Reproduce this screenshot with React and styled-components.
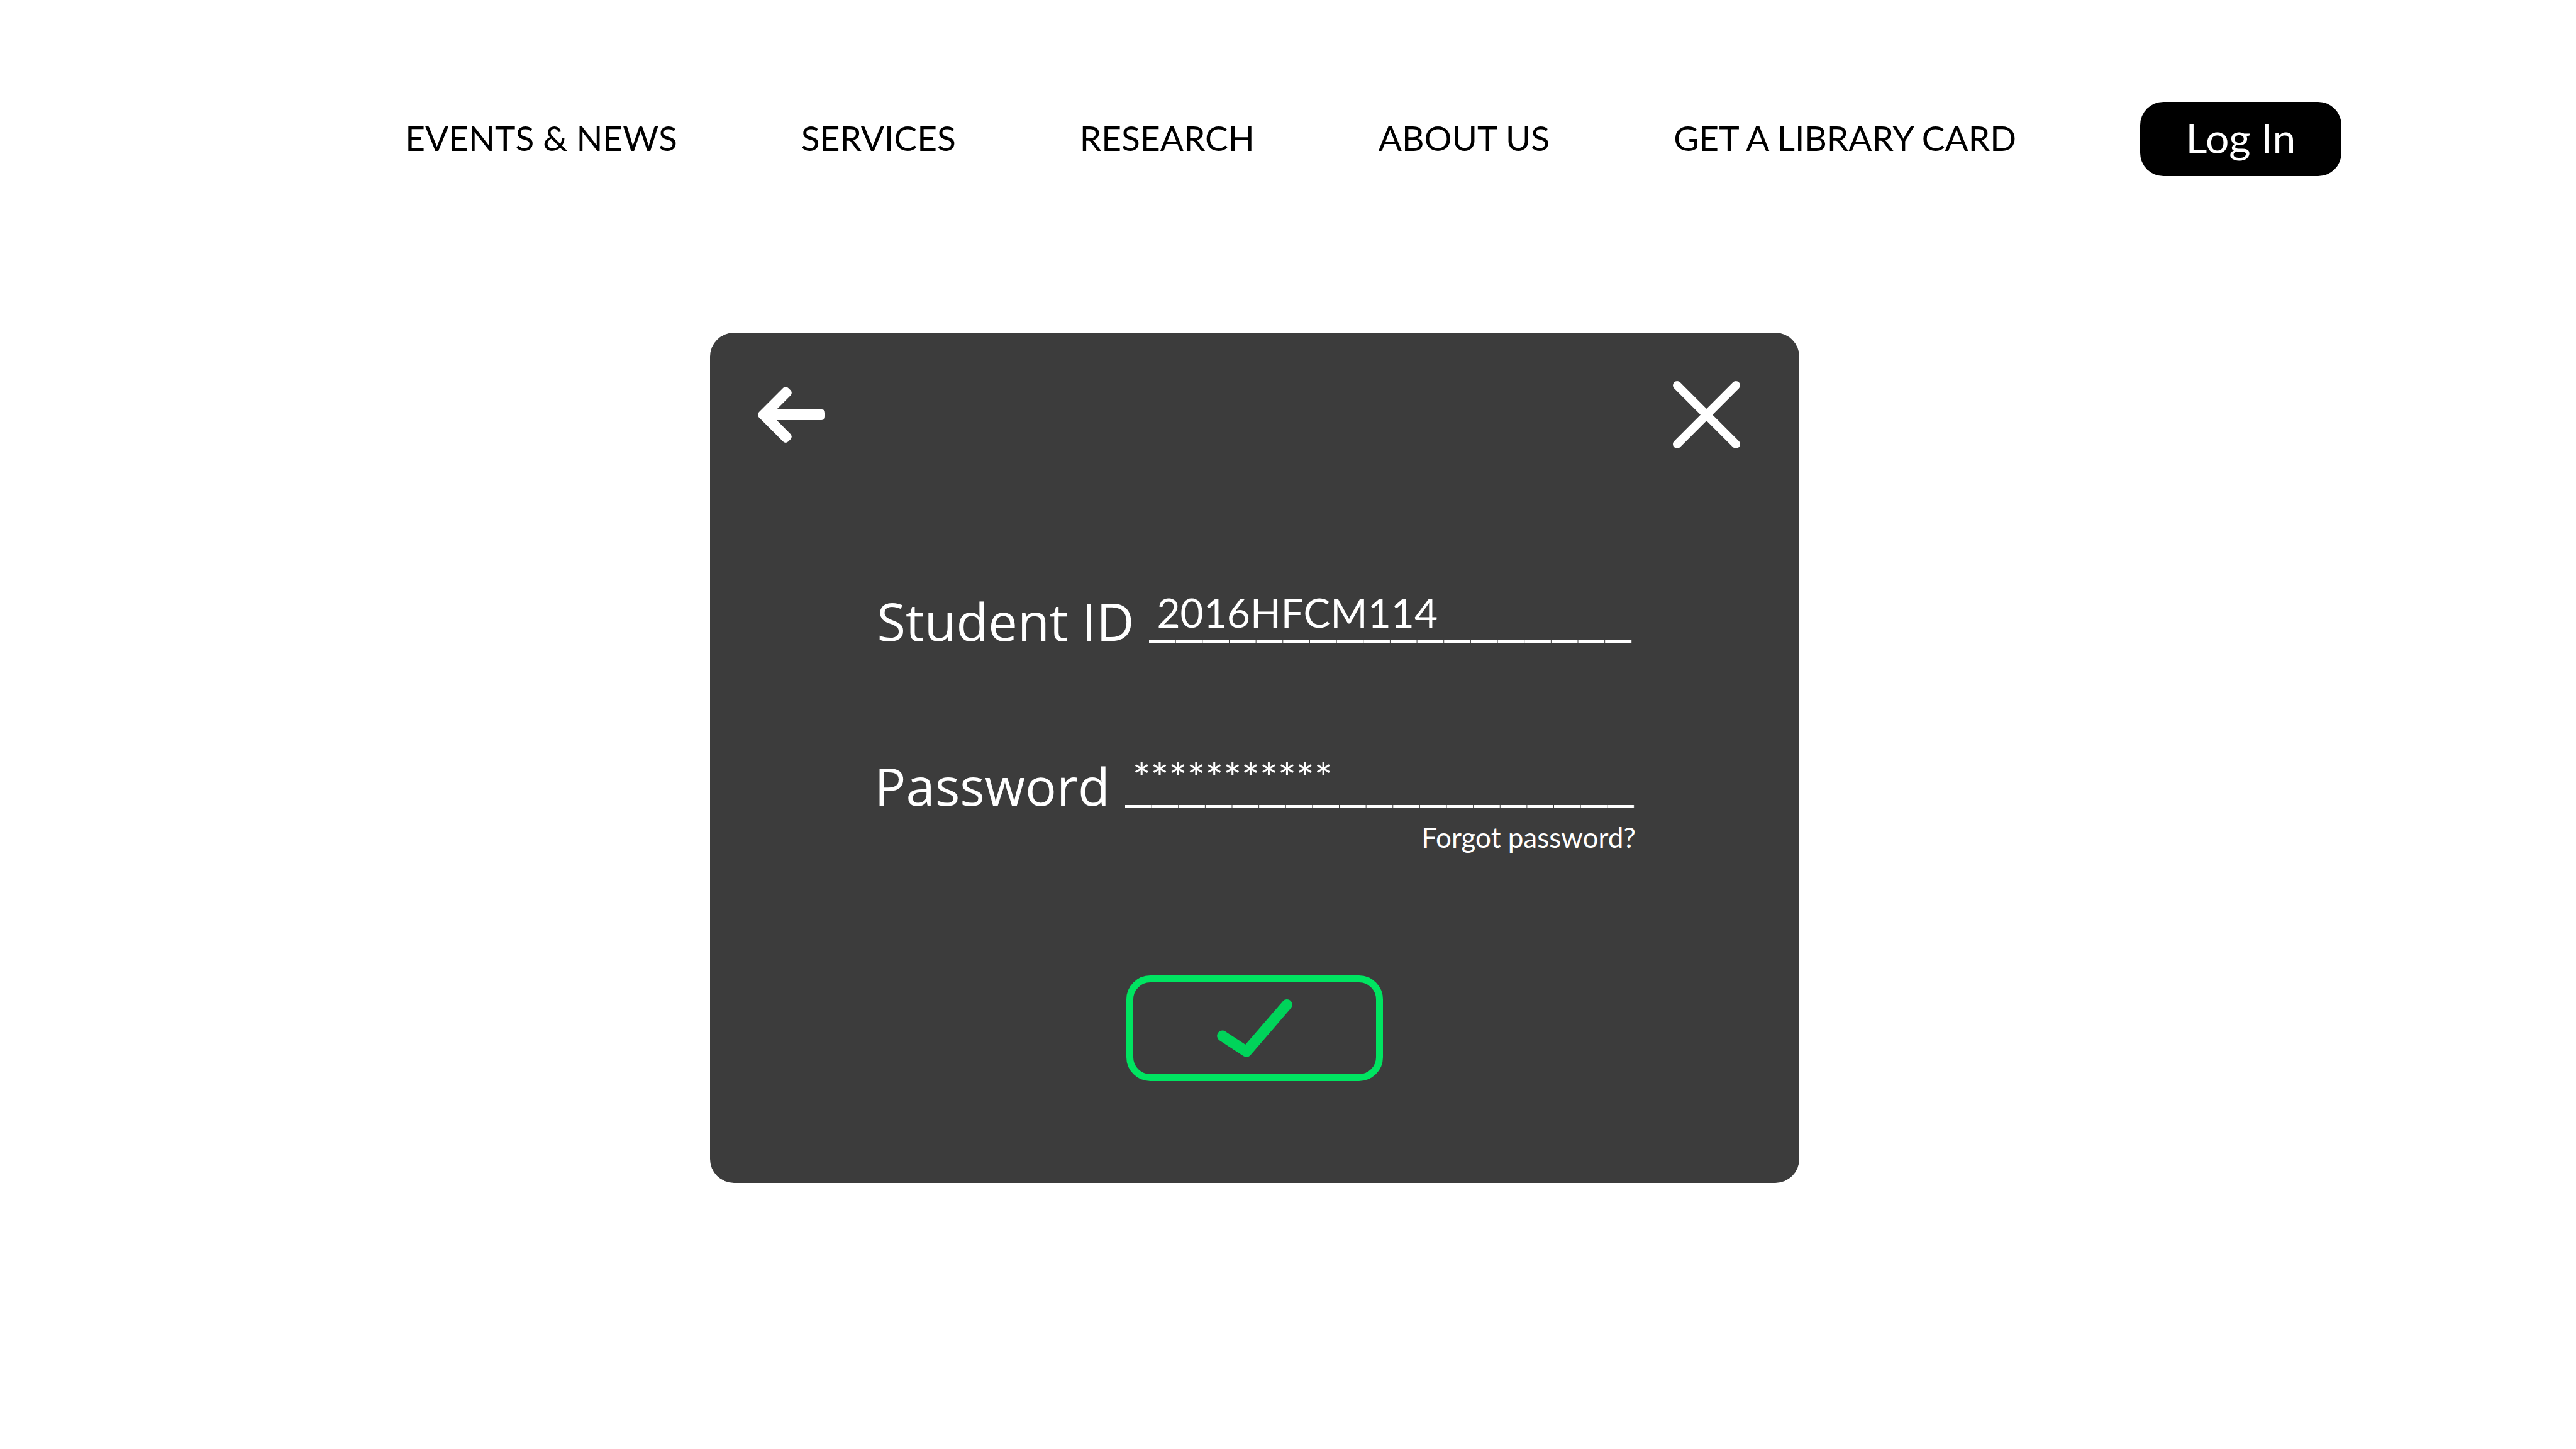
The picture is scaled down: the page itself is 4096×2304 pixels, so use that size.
import React from "react";
import styled, { createGlobalStyle } from "styled-components";

const GlobalStyle = createGlobalStyle`
  *, *::before, *::after { box-sizing: border-box; }
  body {
    margin: 0;
    background: #ffffff;
    font-family: Lato, "Open Sans", sans-serif;
  }
`;

const Page = styled.div`
  display: flex;
  flex-direction: column;
  min-height: 100vh;
`;

const Header = styled.header`
  padding: 162px 373px 0 0;
`;

const Nav = styled.nav`
  display: flex;
  justify-content: flex-end;
  align-items: center;
  gap: 197px;
`;

const NavLink = styled.a`
  padding-bottom: 4px;
  color: #000000;
  font-size: 55px;
  line-height: 66px;
  white-space: nowrap;
  text-decoration: none;
`;

const LoginButton = styled.button`
  width: 320px;
  height: 118px;
  padding: 0 0 4px;
  border: 0;
  border-radius: 37px;
  background: #000000;
  color: #ffffff;
  font: inherit;
  font-size: 66px;
  line-height: 80px;
  cursor: pointer;
`;

const Main = styled.main`
  display: flex;
  justify-content: center;
  padding: 249px 106px 0 0;
`;

const Card = styled.section`
  width: 100%;
  max-width: 1732px;
  padding-bottom: 162px;
  border-radius: 38px;
  background: #3c3c3c;
  color: #ffffff;
`;

const CardBar = styled.div`
  display: flex;
  justify-content: space-between;
  padding: 77px 94px 0 76px;
`;

const IconButton = styled.button`
  display: block;
  width: 107px;
  height: 107px;
  padding: 0;
  border: 0;
  background: none;
  color: inherit;
  cursor: pointer;

  svg {
    display: block;
    width: 100%;
    height: 100%;
  }
`;

const Form = styled.form`
  display: flex;
  flex-direction: column;
  width: 100%;
  max-width: 1212px;
  margin: 222px auto 0;
`;

const Fields = styled.div`
  display: flex;
  flex-direction: column;
  gap: 162px;
`;

const Field = styled.div`
  display: flex;
  justify-content: center;
  gap: 24px;
  height: 100px;
`;

const Label = styled.label`
  font-family: "Open Sans", sans-serif;
  font-size: 83px;
  line-height: 104px;
  white-space: nowrap;
`;

/* The underline is a run of dashes, one for each character slot. */
const Input = styled.input`
  width: calc(${(p) => p.$slots} * 128px / 3);
  height: 88px;
  padding: 0 0 12px 12px;
  border: 0;
  outline: 0;
  border-radius: 0;
  background: linear-gradient(to right, #ffffff calc(100% - 1px), transparent 0)
    left bottom / calc(100% / ${(p) => p.$slots}) 5px repeat-x;
  color: inherit;
  font: inherit;
  font-size: ${(p) => (p.$masked ? 68 : 64)}px;
`;

const ForgotLink = styled.a`
  align-self: flex-end;
  margin-top: 8px;
  color: inherit;
  font-size: 44px;
  line-height: 52px;
  text-decoration: none;
`;

const SubmitButton = styled.button`
  display: flex;
  align-items: center;
  justify-content: center;
  align-self: center;
  width: 408px;
  height: 168px;
  margin-top: 194px;
  padding: 0;
  border: 11px solid #00e461;
  border-radius: 38px;
  background: none;
  color: #00d45a;
  cursor: pointer;

  svg {
    width: 120px;
    height: 92px;
  }
`;

const LINKS = ["EVENTS & NEWS", "SERVICES", "RESEARCH", "ABOUT US", "GET A LIBRARY CARD"];

const BackIcon = () => (
  <svg viewBox="0 0 150 150" fill="currentColor" aria-hidden="true">
    <path d="M2.5 69 L56.5 15 Q62 10 67.5 15 L73 20.5 Q78 26 73 32 L42 63 H142 Q150 63 150 71 V79 Q150 87 142 87 H42 L73 118 Q78 124 73 129.5 L67.5 135 Q62 140 56.5 135 L2.5 81 Q-2 75 2.5 69 Z" />
  </svg>
);

const CloseIcon = () => (
  <svg viewBox="0 0 150 150" fill="none" stroke="currentColor" strokeWidth="19" strokeLinecap="round" aria-hidden="true">
    <path d="M9.5 9.5 L140.5 140.5 M140.5 9.5 L9.5 140.5" />
  </svg>
);

const CheckIcon = () => (
  <svg viewBox="0 0 169 130" fill="none" stroke="currentColor" strokeWidth="24" strokeLinecap="round" strokeLinejoin="round" aria-hidden="true">
    <path d="M12 82 L66 117.5 L157 12" />
  </svg>
);

export default function App() {
  return (
    <Page>
      <GlobalStyle />
      <Header>
        <Nav>
          {LINKS.map((text) => (
            <NavLink key={text} href="#">
              {text}
            </NavLink>
          ))}
          <LoginButton type="button">Log In</LoginButton>
        </Nav>
      </Header>
      <Main>
        <Card>
          <CardBar>
            <IconButton type="button" aria-label="Back">
              <BackIcon />
            </IconButton>
            <IconButton type="button" aria-label="Close">
              <CloseIcon />
            </IconButton>
          </CardBar>
          <Form onSubmit={(e) => e.preventDefault()}>
            <Fields>
              <Field>
                <Label htmlFor="student-id">Student ID</Label>
                <Input id="student-id" type="text" $slots={18} defaultValue="2016HFCM114" />
              </Field>
              <Field>
                <Label htmlFor="password">Password</Label>
                <Input id="password" type="text" $slots={19} $masked defaultValue="***********" />
              </Field>
            </Fields>
            <ForgotLink href="#">Forgot password?</ForgotLink>
            <SubmitButton type="submit" aria-label="Submit">
              <CheckIcon />
            </SubmitButton>
          </Form>
        </Card>
      </Main>
    </Page>
  );
}
